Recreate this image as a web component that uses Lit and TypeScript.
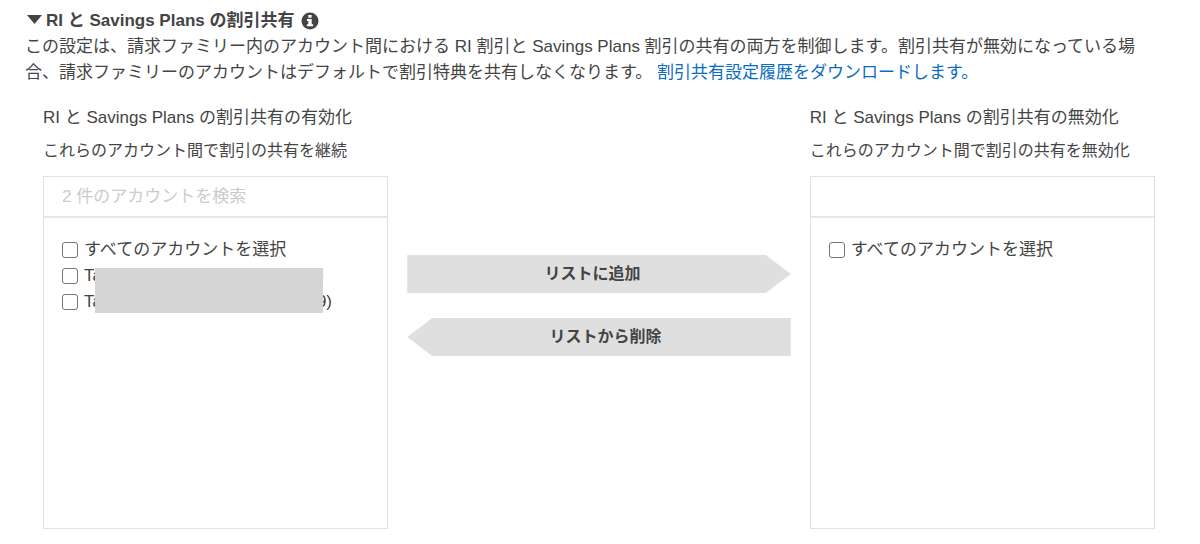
import { LitElement, html, css, svg, nothing } from "lit";
import { customElement, property, state } from "lit/decorators.js";

interface Account {
  id: string;
  start: string;
  end: string;
  size: "short" | "long";
}

const infoIcon = svg`
  <circle cx="9" cy="9" r="8.5" fill="currentColor"></circle>
  <path d="M7.3 3h3.3v2.7H7.3z M6 7h4.7v5.2h1.4v2H5.9v-2h1.4V9H6z" fill="#fff"></path>
`;

@customElement("account-list")
export class AccountList extends LitElement {
  @property() heading = "";
  @property() description = "";
  @property() placeholder = "";
  @property({ attribute: false }) accounts: Account[] = [];

  static styles = css`
    :host {
      display: block;
      min-width: 0;
    }
    * {
      box-sizing: border-box;
    }
    .heading,
    .description {
      margin: 0;
      font-weight: 400;
      line-height: 26px;
      white-space: nowrap;
    }
    .heading {
      font-size: 17px;
    }
    .description {
      margin-top: 7px;
      font-size: 16px;
    }
    .box {
      margin-top: 12px;
      min-height: 353px;
      border: 1px solid #e2e2e2;
    }
    .search {
      display: block;
      width: 100%;
      height: 41px;
      margin: 0;
      padding: 0 18px;
      border: 0;
      border-bottom: 2px solid #e6e6e6;
      background: transparent;
      color: inherit;
      font: inherit;
      font-size: 17px;
      outline-offset: -2px;
    }
    .search::placeholder {
      color: #cbcbcb;
      opacity: 1;
    }
    .options {
      position: relative;
      margin: 0;
      padding: 19px 18px;
      list-style: none;
    }
    .option {
      display: flex;
      align-items: center;
      gap: 6px;
      height: 26px;
      font-size: 17px;
    }
    .check {
      appearance: none;
      flex: none;
      width: 16px;
      height: 16px;
      margin: 0;
      border: 1px solid #757575;
      border-radius: 3px;
      background: #fff;
    }
    .check:checked {
      background: #0073bb;
      border-color: #0073bb;
    }
    .label {
      white-space: nowrap;
    }
    .name {
      display: flex;
      justify-content: space-between;
    }
    .short {
      width: 240px;
    }
    .long {
      width: 248px;
    }
    .mask {
      position: absolute;
      top: 50px;
      left: 51px;
      width: 228px;
      height: 45px;
      background: #d5d5d5;
    }
  `;

  render() {
    return html`
      <h3 class="heading">${this.heading}</h3>
      <p class="description">${this.description}</p>
      <div class="box">
        <input class="search" type="text" aria-label=${this.heading} placeholder=${this.placeholder} />
        <ul class="options">
          <li class="option">
            <input class="check" type="checkbox" id="all" />
            <label class="label" for="all">すべてのアカウントを選択</label>
          </li>
          ${this.accounts.map(
            (a) => html`
              <li class="option">
                <input class="check" type="checkbox" id=${a.id} />
                <label class="label name ${a.size}" for=${a.id}>
                  <span>${a.start}</span><span>${a.end}</span>
                </label>
              </li>
            `
          )}
          ${this.accounts.length ? html`<li class="mask" aria-hidden="true"></li>` : nothing}
        </ul>
      </div>
    `;
  }
}

@customElement("app-root")
export class AppRoot extends LitElement {
  @state() private open = true;

  private accounts: Account[] = [
    { id: "account-1", start: "Ta", end: ")", size: "short" },
    { id: "account-2", start: "Ta", end: "9)", size: "long" },
  ];

  static styles = css`
    :host {
      display: block;
      padding: 8px 45px 15px 25px;
      background: #fff;
      color: #444;
      font-family: "Liberation Sans", "Noto Sans CJK JP", sans-serif;
      font-size: 17px;
      line-height: 26px;
    }
    * {
      box-sizing: border-box;
    }
    .title {
      display: flex;
      align-items: center;
      gap: 7px;
      margin: 0;
      font-size: 17px;
      line-height: 26px;
    }
    .toggle,
    .info {
      display: flex;
      align-items: center;
      padding: 0;
      border: 0;
      background: none;
      color: inherit;
      font: inherit;
      cursor: pointer;
    }
    .toggle {
      gap: 4px;
      padding-left: 2px;
    }
    .caret {
      width: 15px;
      height: 12px;
    }
    .closed {
      transform: rotate(-90deg);
    }
    .glyph {
      width: 18px;
      height: 18px;
    }
    .intro {
      margin: 0;
      text-spacing-trim: space-all;
    }
    .link {
      color: #0a6cbf;
      text-decoration: none;
    }
    .link:hover {
      text-decoration: underline;
    }
    .transfer {
      display: grid;
      grid-template-columns: 9fr 10fr 9fr;
      gap: 19px;
      padding: 19px 0 0 18px;
    }
    .actions {
      display: flex;
      flex-direction: column;
      gap: 25px;
      padding-top: 150px;
    }
    .move {
      height: 38px;
      padding: 0 12px;
      border: 0;
      background: #dfdfdf;
      color: inherit;
      font: inherit;
      font-size: 16px;
      font-weight: 700;
      cursor: pointer;
    }
    .add {
      padding-right: 25px;
      clip-path: polygon(0 0, calc(100% - 25px) 0, 100% 50%, calc(100% - 25px) 100%, 0 100%);
    }
    .remove {
      padding-left: 25px;
      clip-path: polygon(25px 0, 100% 0, 100% 100%, 25px 100%, 0 50%);
    }
  `;

  render() {
    return html`
      <section lang="ja">
        <h2 class="title">
          <button class="toggle" aria-expanded=${this.open} @click=${() => (this.open = !this.open)}>
            <svg class="caret ${this.open ? "" : "closed"}" viewBox="0 0 15 12" aria-hidden="true">
              <path d="M0 0h15L7.5 9z" fill="currentColor"></path>
            </svg>
            RI と Savings Plans の割引共有
          </button>
          <button class="info" aria-label="情報">
            <svg class="glyph" viewBox="0 0 18 18" aria-hidden="true">${infoIcon}</svg>
          </button>
        </h2>
        ${this.open ? this.renderBody() : nothing}
      </section>
    `;
  }

  private renderBody() {
    return html`
      <p class="intro">
        この設定は、請求ファミリー内のアカウント間における RI 割引と Savings Plans 割引の共有の両方を制御します。割引共有が無効になっている場合、請求ファミリーのアカウントはデフォルトで割引特典を共有しなくなります。
        <a class="link" href="#download">割引共有設定履歴をダウンロードします。</a>
      </p>
      <div class="transfer">
        <account-list
          heading="RI と Savings Plans の割引共有の有効化"
          description="これらのアカウント間で割引の共有を継続"
          placeholder="2 件のアカウントを検索"
          .accounts=${this.accounts}
        ></account-list>
        <div class="actions">
          <button class="move add">リストに追加</button>
          <button class="move remove">リストから削除</button>
        </div>
        <account-list
          heading="RI と Savings Plans の割引共有の無効化"
          description="これらのアカウント間で割引の共有を無効化"
        ></account-list>
      </div>
    `;
  }
}
